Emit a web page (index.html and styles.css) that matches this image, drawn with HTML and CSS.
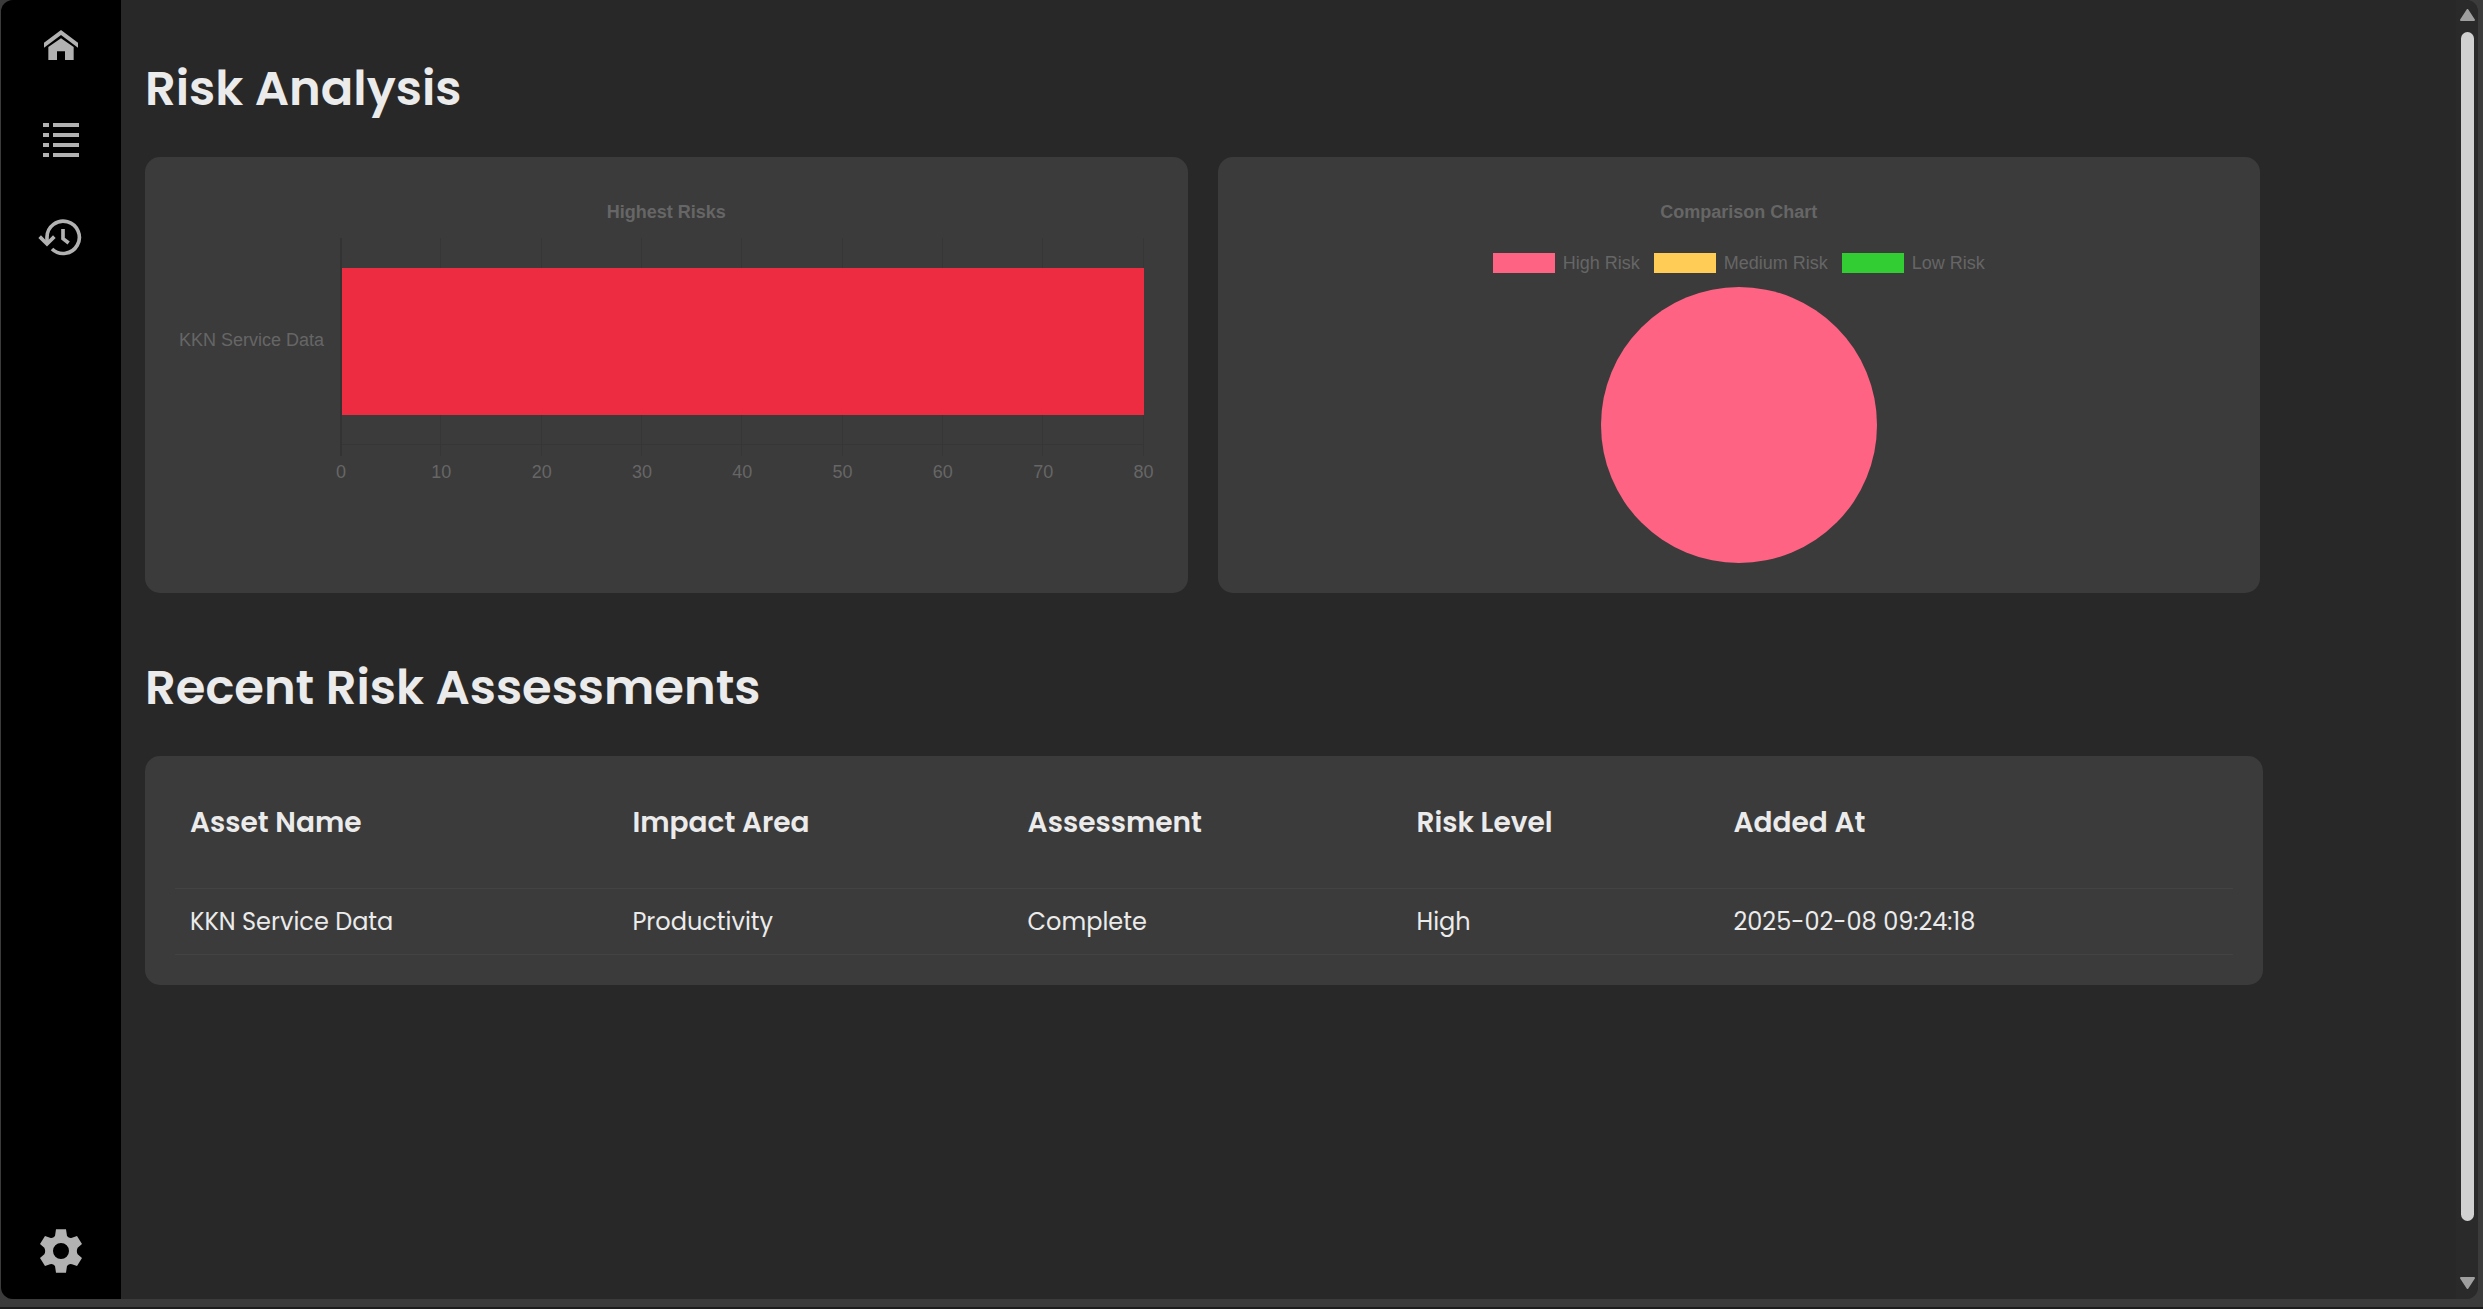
FILE: index.html
```html
<!DOCTYPE html>
<html lang="en">
<head>
<meta charset="utf-8">
<title>Risk Analysis</title>
<link rel="stylesheet" href="styles.css">
</head>
<body>
<div class="window">
  <nav class="sidebar" aria-label="Main">
    <a class="nav-link" href="#home" aria-label="Home">
      <svg class="icon" viewBox="0 0 144 144"><path d="M72 27 123 65V80L72 42 21 80V65Z"/><path d="M72 52 110 78V117H84V91H60V117H34V78Z"/></svg>
    </a>
    <a class="nav-link" href="#list" aria-label="Assets">
      <svg class="icon" viewBox="0 0 144 144"><path d="M18 18h18v12H18zM48 18h78v12H48zM18 48h18v12H18zM48 48h78v12H48zM18 78h18v12H18zM48 78h78v12H48zM18 108h18v12H18zM48 108h78v12H48z"/></svg>
    </a>
    <a class="nav-link" href="#history" aria-label="History">
      <svg class="icon icon-line" viewBox="0 0 144 144"><path d="M30 92V72A48.500 48.500 0 1 1 45 108"/><path d="M8 71 30 93 52 71"/><path d="M78 48V77L95 90"/></svg>
    </a>
    <a class="nav-link nav-link-last" href="#settings" aria-label="Settings">
      <svg class="icon" viewBox="0 0 144 144"><path fill-rule="evenodd" d="M57 7H87L90 27Q97 35 105 32L120 27 135 51 122 62Q117 72 122 82L135 93 120 117 105 112Q97 109 90 117L87 137H57L54 117Q47 109 39 112L24 117 9 93 22 82Q27 72 22 62L9 51 24 27 39 32Q47 35 54 27ZM72 48A24 24 0 1 0 72 96 24 24 0 1 0 72 48Z"/></svg>
    </a>
  </nav>
  <main class="content">
    <h1 class="heading">Risk Analysis</h1>
    <div class="charts">
      <section class="card chart">
        <h2 class="chart-title">Highest Risks</h2>
        <div class="bar-chart">
          <span class="bar-label">KKN Service Data</span>
          <div class="plot">
            <div class="grid"><i></i><i></i><i></i><i></i><i></i><i></i><i></i><i></i></div>
            <div class="bar" style="width:100%"></div>
          </div>
          <div class="axis"><span>0</span><span>10</span><span>20</span><span>30</span><span>40</span><span>50</span><span>60</span><span>70</span><span>80</span></div>
        </div>
      </section>
      <section class="card chart">
        <h2 class="chart-title">Comparison Chart</h2>
        <ul class="legend">
          <li><i class="swatch high"></i>High Risk</li>
          <li><i class="swatch medium"></i>Medium Risk</li>
          <li><i class="swatch low"></i>Low Risk</li>
        </ul>
        <div class="pie"></div>
      </section>
    </div>
    <h1 class="heading">Recent Risk Assessments</h1>
    <section class="card table-card">
      <table class="table">
        <colgroup><col class="col-asset"><col class="col-impact"><col class="col-assessment"><col class="col-level"><col></colgroup>
        <thead><tr><th>Asset Name</th><th>Impact Area</th><th>Assessment</th><th>Risk Level</th><th>Added At</th></tr></thead>
        <tbody><tr><td>KKN Service Data</td><td>Productivity</td><td>Complete</td><td>High</td><td>2025-02-08 09:24:18</td></tr></tbody>
      </table>
    </section>
  </main>
  <div class="scrollbar" aria-hidden="true">
    <svg class="arrow" viewBox="0 0 15 12"><path d="M7.500 1 14 11H1Z"/></svg>
    <div class="thumb"></div>
    <svg class="arrow" viewBox="0 0 15 12"><path d="M7.500 11 14 1H1Z"/></svg>
  </div>
</div>
</body>
</html>
```
FILE: styles.css
```css
* { box-sizing: border-box; }

body {
  margin: 0;
  min-height: 100vh;
  padding: 0 5px 8px 1px;
  border-bottom: 2px solid #1c1c1c;
  background: #3b3b3b;
  color: #ebebeb;
  font-family: Poppins, Inter, sans-serif;
}

.window {
  display: flex;
  min-height: calc(100vh - 10px);
  border-radius: 12px;
  overflow: hidden;
  background: #282828;
}

.sidebar {
  display: flex;
  flex-direction: column;
  align-items: center;
  gap: 48px;
  width: 120px;
  flex: none;
  padding: 21px 0 24px;
  background: #000;
}

.nav-link { display: block; height: 48px; }
.nav-link-last { margin-top: auto; }
.icon { display: block; width: 48px; height: 48px; fill: #b2b2b2; }
.icon-line { fill: none; stroke: #b2b2b2; stroke-width: 11; }

.content {
  flex: 1;
  min-width: 0;
  padding: 53px 193px 0 24px;
}

.heading {
  margin: 0 0 32px;
  font-size: 48px;
  line-height: 72px;
  font-weight: 600;
}

.card { border-radius: 15px; background: #3b3b3b; }

.charts {
  display: grid;
  grid-template-columns: 1fr 1fr;
  gap: 30px;
  margin: 0 3px 59px 0;
}

.chart {
  min-height: 436px;
  padding: 43px 30px 30px;
  color: #666;
  font-family: "Liberation Sans", Arial, sans-serif;
  font-size: 18px;
  line-height: 24px;
}

.chart-title {
  margin: 0;
  text-align: center;
  font-size: 18px;
  line-height: 24px;
}

.bar-chart {
  display: grid;
  grid-template-columns: auto 1fr;
  column-gap: 16px;
  padding: 14px 14px 0 4px;
}

.bar-label { align-self: center; padding-bottom: 14px; }

.plot { position: relative; }

.grid {
  display: grid;
  grid-template-columns: repeat(8, 1fr);
  height: 218px;
  border-right: 1px solid #363636;
  background: linear-gradient(#363636, #363636) 0 206px / 100% 1px no-repeat;
}
.grid i { border-left: 1px solid #363636; }
.grid i:first-child { border-left: 2px solid #333; }

.bar {
  position: absolute;
  left: 0;
  top: 30px;
  height: 147px;
  border-left: 2px solid #333;
  background: #ee2c41;
}

.axis {
  grid-column: 2;
  display: flex;
  justify-content: space-between;
  margin: 4px -12px 0 -11px;
}
.axis span { width: 24px; text-align: center; }

.legend {
  display: flex;
  justify-content: center;
  gap: 14px;
  margin: 27px 0 0;
  padding: 0;
  list-style: none;
}
.legend li { display: flex; align-items: center; gap: 8px; }
.swatch { width: 62px; height: 20px; }
.high { background: #ff6384; }
.medium { background: #ffcd56; }
.low { background: #32cd32; }

.pie {
  width: 276px;
  height: 276px;
  margin: 12px auto 0;
  border-radius: 50%;
  background: #ff6384;
}

.table-card { padding: 30px; }

.table {
  width: 100%;
  table-layout: fixed;
  border-collapse: collapse;
  text-align: left;
}
.col-asset { width: 21.5%; }
.col-impact { width: 19.2%; }
.col-assessment { width: 18.9%; }
.col-level { width: 15.4%; }
.table th {
  height: 102px;
  padding: 16px 15px;
  vertical-align: top;
  font-size: 28px;
  line-height: 42px;
  font-weight: 600;
}
.table td {
  height: 66px;
  padding: 2px 15px 0;
  font-size: 24px;
  line-height: 36px;
}
.table tr { border-bottom: 1px solid #434343; }

.scrollbar {
  display: flex;
  flex-direction: column;
  align-items: center;
  flex: none;
  width: 22px;
  padding: 9px 0 10px;
  background: #2a2a2a;
}
.arrow { width: 15px; height: 12px; fill: #9f9f9f; stroke: #9f9f9f; stroke-width: 2; stroke-linejoin: round; }
.thumb {
  flex: 1;
  width: 13px;
  margin: 11px 0 56px;
  border-radius: 7px;
  background: #d1d1d1;
}
```
